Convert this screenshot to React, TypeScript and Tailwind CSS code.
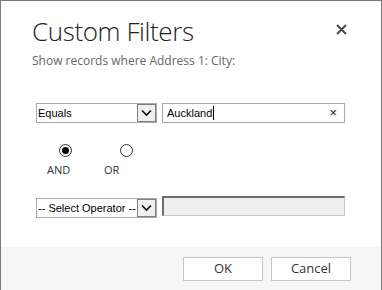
import React from "react";

const ui = { fontFamily: '"Open Sans", "Noto Sans", sans-serif' };
const arial = { fontFamily: '"Liberation Sans", Arial, sans-serif' };

const Chevron: React.FC = () => (
  <svg width="11" height="8" viewBox="0 0 11 8">
    <path d="M1 1.5 L5.5 6 L10 1.5" fill="none" stroke="#111" strokeWidth="1.6" />
  </svg>
);

const SelectBox: React.FC<{ label: string; className?: string }> = ({
  label,
  className = "",
}) => (
  <div
    className={`flex h-[20px] w-[121px] items-stretch border border-[#a9a9a9] bg-white ${className}`}
    style={arial}
  >
    <div className="flex flex-1 items-center overflow-hidden whitespace-nowrap pl-[1px] text-[11px] text-black">
      {label}
    </div>
    <div className="flex w-[19px] items-center justify-center border border-[#7f7f7f] bg-[#f0f0f0]">
      <Chevron />
    </div>
  </div>
);

const Radio: React.FC<{ checked?: boolean }> = ({ checked }) => (
  <div className="flex h-[13px] w-[13px] items-center justify-center rounded-full border border-[#333] bg-white">
    {checked && <div className="h-[7px] w-[7px] rounded-full bg-black" />}
  </div>
);

export default function App() {
  return (
    <div className="flex h-[290px] w-[382px] flex-col border-x border-t border-[#7a7a7a] bg-white">
      <div className="relative flex-1 px-[31px] pt-[12px]">
        <div
          className="text-[26px] font-light leading-[36px] tracking-[-0.4px] text-[#222]"
          style={ui}
        >
          Custom Filters
        </div>
        <div className="mt-[4px] text-[12px] leading-[16px] text-[#666]" style={ui}>
          Show records where Address 1: City:
        </div>
        <button className="absolute right-[34px] top-[23px] text-[#444]">
          <svg width="11" height="11" viewBox="0 0 11 11">
            <path d="M1 1 L10 10 M10 1 L1 10" stroke="#444" strokeWidth="1.8" />
          </svg>
        </button>

        {/* condition row */}
        <div className="mt-[34px] flex gap-[5px] pl-[4px]">
          <SelectBox label="Equals" />
          <div
            className="flex h-[20px] w-[183px] items-center border border-[#a9a9a9] bg-white pl-[4px] pr-[7px] text-[11px] text-black"
            style={arial}
          >
            <span>Auckland</span>
            <span className="ml-[1px] h-[14px] w-px bg-black" />
            <span className="ml-auto text-[13px] text-[#222]">×</span>
          </div>
        </div>

        {/* and / or */}
        <div className="mt-[21px] flex pl-[15px]">
          <div className="flex w-[57px] flex-col">
            <div className="ml-[12px]">
              <Radio checked />
            </div>
            <div className="mt-[7px] text-[11px] leading-none text-[#333]" style={ui}>
              AND
            </div>
          </div>
          <div className="flex flex-col">
            <div className="ml-[16px]">
              <Radio />
            </div>
            <div className="mt-[7px] text-[11px] leading-none text-[#333]" style={ui}>
              OR
            </div>
          </div>
        </div>

        {/* second condition */}
        <div className="mt-[21px] flex items-start gap-[5px] pl-[4px]">
          <SelectBox label="-- Select Operator --" className="mt-[2px]" />
          <div className="h-[20px] w-[183px] border-l-2 border-t-2 border-r border-b border-l-[#6d6d6d] border-t-[#6d6d6d] border-r-[#c8c8c8] border-b-[#c8c8c8] bg-[#efefef]" />
        </div>
      </div>

      <div className="flex h-[43px] items-start justify-end gap-[8px] bg-[#f6f6f6] pr-[30px] pt-[10px]">
        <button
          className="h-[24px] w-[80px] border border-[#c6c6c6] bg-white text-[13px] text-[#333]"
          style={ui}
        >
          OK
        </button>
        <button
          className="h-[24px] w-[80px] border border-[#c6c6c6] bg-white text-[13px] text-[#333]"
          style={ui}
        >
          Cancel
        </button>
      </div>
    </div>
  );
}
